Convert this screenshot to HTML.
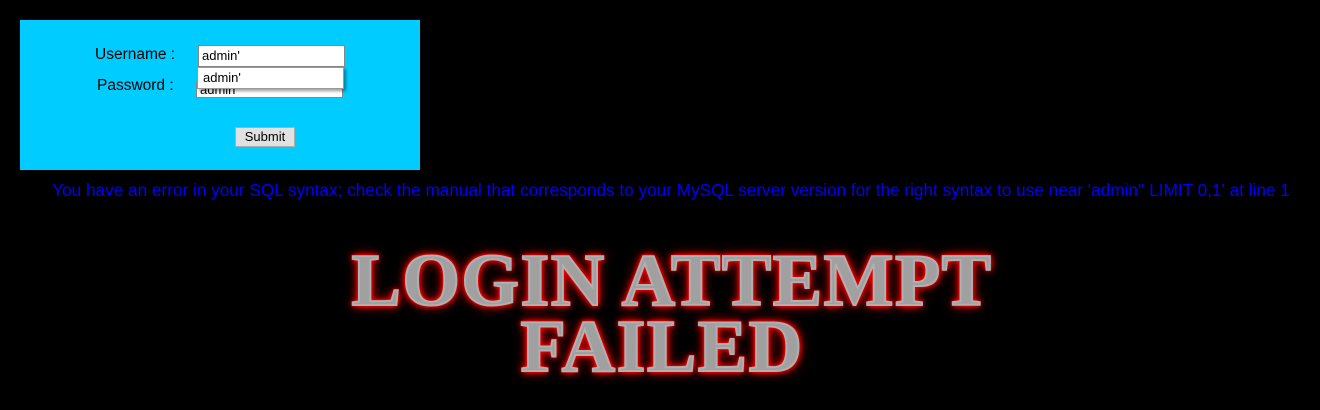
<!DOCTYPE html>
<html><head><style>
html,body{margin:0;padding:0;background:#000;width:1320px;height:410px;overflow:hidden;font-family:"Liberation Sans",sans-serif}
.box{position:absolute;left:20px;top:20px;width:400px;height:150px;background:#00ccff}
.lbl{position:absolute;font-size:15.5px;color:#000}
.inp{position:absolute;background:#fff;border:1px solid #888;box-sizing:border-box;font-size:13px;color:#000;padding-left:3px;line-height:20px}
.err{position:absolute;left:0;width:1342px;top:180px;text-align:center;color:#0000ff;font-size:17.2px;white-space:nowrap}
.big{position:absolute;left:0;width:1320px;text-align:center;font-family:"Liberation Serif",serif;font-weight:bold;font-size:74px;line-height:74px;color:#a0a0a0;-webkit-text-stroke:2px #b0b0b0;text-shadow:0 0 2px #ff0000,0 0 3px #ff0000,0 0 4px #ff0000,0 0 6px #ff0000,0 0 9px #ff0000,0 0 13px #b00000;letter-spacing:1.5px}
</style></head><body>
<div class="box">
<div class="lbl" style="left:75px;top:26px">Username :</div>
<div class="lbl" style="left:77px;top:57px">Password :</div>
<div class="inp" style="left:176px;top:62px;width:147px;height:16px;line-height:14px;overflow:hidden">admin</div>
<div class="inp" style="left:178px;top:25px;width:147px;height:22px">admin'</div>
<div class="inp" style="left:177px;top:47px;width:147px;height:22px;padding-left:5px;box-shadow:2px 2px 3px rgba(0,0,0,.4);border-color:#999">admin'</div>
<div style="position:absolute;left:215px;top:107px;width:60px;height:20px;background:#e1e1e1;border:1px solid #adadad;box-sizing:border-box;font-size:13px;text-align:center;line-height:18px">Submit</div>
</div>
<div class="err">You have an error in your SQL syntax; check the manual that corresponds to your MySQL server version for the right syntax to use near 'admin'' LIMIT 0,1' at line 1</div>
<div class="big" style="top:244px;padding-left:12px">LOGIN ATTEMPT</div>
<div class="big" style="top:310px;padding-left:2px">FAILED</div>
</body></html>
